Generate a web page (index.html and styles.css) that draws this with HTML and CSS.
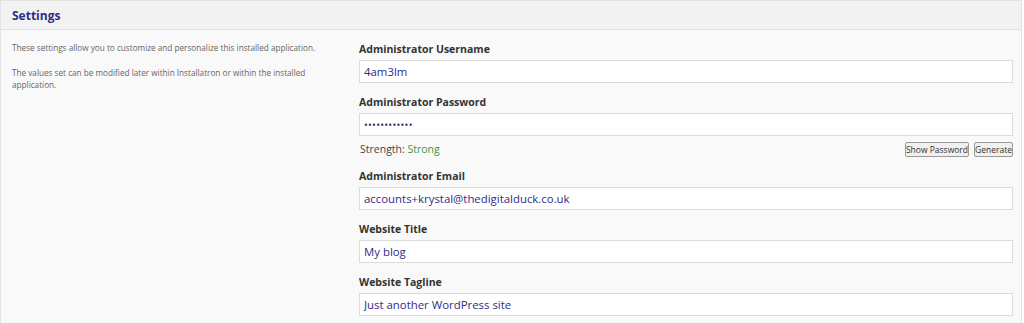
FILE: index.html
```html
<!DOCTYPE html>
<html lang="en">

<head>
    <meta charset="UTF-8">
    <meta name="viewport" content="width=device-width, initial-scale=1.0">
    <title>Settings</title>
    <link rel="stylesheet" href="styles.css">
</head>

<body>
    <div class="panel">
        <div class="panel-head">
            <h2>Settings</h2>
        </div>
        <div class="panel-body">
            <div class="desc">
                <p>These settings allow you to customize and personalize this installed application.</p>
                <p>The values set can be modified later within Installatron or within the installed application.</p>
            </div>
            <form class="fields">
                <label for="username">Administrator Username</label>
                <input type="text" id="username" value="4am3lm">

                <label for="password">Administrator Password</label>
                <input type="password" id="password" value="abcdefghijkl">
                <div class="strength-row">
                    <span class="strength">Strength: <span class="strong">Strong</span></span>
                    <span class="pw-buttons">
                        <button type="button">Show Password</button>
                        <button type="button">Generate</button>
                    </span>
                </div>

                <label for="email">Administrator Email</label>
                <input type="text" id="email" value="accounts+krystal@thedigitalduck.co.uk">

                <label for="title">Website Title</label>
                <input type="text" id="title" value="My blog">

                <label for="tagline">Website Tagline</label>
                <input type="text" id="tagline" value="Just another WordPress site">
            </form>
        </div>
    </div>
</body>

</html>
```

FILE: styles.css
```css
html,
body {
    height: 323px;
    overflow: hidden;
}

body {
    margin: 0;
    font-family: "Open Sans", sans-serif;
    background-color: #ffffff;
    color: #333333;
}

.panel {
    width: 1022px;
    border: 1px solid #e2e2e2;
    box-sizing: border-box;
    background-color: #f9f9f9;
    padding-bottom: 20px;
}

.panel-head {
    height: 28px;
    background-color: #f2f2f2;
    border-bottom: 1px solid #e2e2e2;
    padding-left: 11px;
    display: flex;
    align-items: center;
}

.panel-head h2 {
    margin: 0;
    font-size: 12px;
    font-weight: 700;
    color: #2e2d88;
}

.panel-body {
    display: flex;
}

.desc {
    width: 348px;
    box-sizing: border-box;
    padding: 12px 17px 0 11px;
    font-size: 8.2px;
    line-height: 12px;
    color: #666666;
}

.desc p {
    margin: 0 0 13px 0;
}

.fields {
    flex: 1;
    display: flex;
    flex-direction: column;
    padding: 12px 8px 0 10px;
}

.fields label {
    font-size: 10.5px;
    font-weight: 700;
    color: #333333;
    line-height: 14px;
    margin-bottom: 4px;
}

.fields input {
    height: 23px;
    box-sizing: border-box;
    border: 1px solid #dcdcdc;
    background-color: #ffffff;
    padding: 0 4px;
    font-family: "Open Sans", sans-serif;
    font-size: 11.4px;
    color: #2e2d88;
    margin-bottom: 12px;
    outline: none;
}

.fields input[type="password"] {
    font-size: 10px;
    letter-spacing: 0.3px;
}

.strength-row {
    display: flex;
    justify-content: space-between;
    align-items: center;
    margin-top: -7px;
    margin-bottom: 12px;
    height: 16px;
}

.strength {
    font-size: 10.5px;
    color: #444444;
    padding-left: 1px;
}

.strong {
    color: #3a963a;
}

.pw-buttons {
    display: flex;
    gap: 5px;
}

.pw-buttons button {
    font-family: "Open Sans", sans-serif;
    font-size: 8.5px;
    color: #333333;
    background-color: #f0f0f0;
    border: 1px solid #9a9a9a;
    border-radius: 2px;
    padding: 0;
    height: 15px;
}
```
